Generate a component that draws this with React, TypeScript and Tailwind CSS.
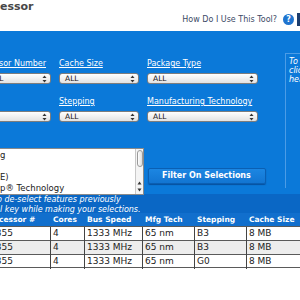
import type { ReactNode } from 'react';

const Arrows = () => (
    <svg width="5" height="8" viewBox="0 0 5 8" className="shrink-0">
        <path d="M2.5 0.5 L4.5 3 H0.5 Z" fill="#333" />
        <path d="M2.5 7.5 L4.5 5 H0.5 Z" fill="#333" />
    </svg>
);

const Select = ({ className = '' }: { className?: string }) => (
    <div
        className={`h-[11px] flex items-center justify-between rounded-[3px] border border-[#7d7d7d] bg-gradient-to-b from-white to-[#e2e2e2] pl-[5px] pr-[3px] text-[7.5px] leading-none text-[#111] ${className}`}
    >
        <span>ALL</span>
        <Arrows />
    </div>
);

const Label = ({ children, className = '' }: { children: ReactNode; className?: string }) => (
    <div className={`h-[10px] leading-[10px] text-[8px] text-white underline whitespace-nowrap ${className}`}>{children}</div>
);

const rows = [
    { id: '3355', step: 'B3', bg: 'bg-white' },
    { id: '3355', step: 'B3', bg: 'bg-[#ededed]' },
    { id: '3355', step: 'G0', bg: 'bg-white' },
];

const App = () => {
    return (
        <div className="w-[300px] h-[300px] overflow-hidden bg-white font-['DejaVu_Sans',Verdana,sans-serif]">
            {/* top strip */}
            <div className="h-[31px] flex justify-between items-start">
                <div className="mt-[1px] text-[11px] leading-[12px] font-bold text-[#474747] whitespace-nowrap">essor</div>
                <div className="mt-[13px] flex items-center">
                    <span className="text-[8px] text-[#3c4a66] whitespace-nowrap">How Do I Use This Tool?</span>
                    <span className="ml-[6px] w-[11px] h-[11px] rounded-full bg-[#1f74cf] text-white text-[8px] font-bold leading-none flex items-center justify-center">?</span>
                    <span className="ml-[3px] w-[3px] h-[13px] bg-[#1c3d6e]" />
                </div>
            </div>

            {/* search panel */}
            <div className="h-[163px] bg-[#0b79d9] flex">
                <div className="w-[285px] pt-[28px]">
                    <div className="grid grid-cols-[51px_80px_111px] gap-x-[8px] gap-y-[13px]">
                        <div className="flex flex-col gap-[4px]">
                            <Label className="-ml-[1px]">sor Number</Label>
                            <Select className="w-[67px] -ml-[16px]" />
                        </div>
                        <div className="flex flex-col gap-[4px]">
                            <Label>Cache Size</Label>
                            <Select />
                        </div>
                        <div className="flex flex-col gap-[4px]">
                            <Label>Package Type</Label>
                            <Select />
                        </div>
                        <div className="flex flex-col gap-[4px]">
                            <div className="h-[10px]" />
                            <Select className="w-[71px] -ml-[20px]" />
                        </div>
                        <div className="flex flex-col gap-[4px]">
                            <Label>Stepping</Label>
                            <Select />
                        </div>
                        <div className="flex flex-col gap-[4px]">
                            <Label>Manufacturing Technology</Label>
                            <Select />
                        </div>
                    </div>

                    <div className="mt-[26px] flex items-start">
                        <div className="w-[144px] h-[47px] bg-white border border-[#8a8a8a] border-l-0 flex">
                            <div className="flex-1 pt-[1px] text-[8.5px] leading-[11px] text-[#222] whitespace-nowrap overflow-hidden">
                                <div>g</div>
                                <div>&nbsp;</div>
                                <div>E)</div>
                                <div>p® Technology</div>
                            </div>
                            <div className="w-[8px] border-l border-[#c8c8c8] bg-[#f4f4f4] flex flex-col items-center">
                                <div className="mt-[1px] w-[6px] h-[17px] rounded-full border border-[#9a9a9a] bg-gradient-to-r from-white to-[#dcdcdc]" />
                                <div className="flex-1" />
                                <svg width="5" height="4" viewBox="0 0 5 4" className="mb-[3px]">
                                    <path d="M2.5 0.5 L4.5 3.5 H0.5 Z" fill="#333" />
                                </svg>
                                <svg width="5" height="4" viewBox="0 0 5 4" className="mb-[2px]">
                                    <path d="M2.5 3.5 L4.5 0.5 H0.5 Z" fill="#333" />
                                </svg>
                            </div>
                        </div>
                        <button className="ml-[4px] mt-[20px] w-[118px] h-[16px] rounded-[2px] border border-[#0a5fb3] bg-gradient-to-b from-[#1c86e2] to-[#1275d2] shadow-[0_1px_1px_rgba(0,40,100,0.5)] pl-[13px] text-left text-[8px] font-bold text-white whitespace-nowrap">
                            Filter On Selections
                        </button>
                    </div>
                </div>

                <div className="flex-1 mt-[22px] h-[135px] border-l border-t border-[#4c9ce6] pl-[3px] pt-[3px] text-[8px] leading-[9px] italic text-white whitespace-nowrap overflow-hidden">
                    <div>To</div>
                    <div>clic</div>
                    <div>hea</div>
                </div>
            </div>

            {/* instructions */}
            <div className="h-[19px] bg-[#0a67c5] pt-[1px] text-[8px] leading-[10px] italic text-white whitespace-nowrap">
                <div className="-ml-[3px]">o de-select features previously</div>
                <div>l key while making your selections.</div>
            </div>

            {/* results */}
            <div className="grid grid-cols-[51px_34px_58px_52px_52px_1fr] text-[7.5px] font-bold text-white bg-[#116fcd] h-[13px] items-center whitespace-nowrap">
                <div className="-ml-[1px]">cessor #</div>
                <div className="pl-[2px]">Cores</div>
                <div className="pl-[2px]">Bus Speed</div>
                <div className="pl-[2px]">Mfg Tech</div>
                <div className="pl-[2px]">Stepping</div>
                <div className="pl-[2px]">Cache Size</div>
            </div>
            {rows.map((r, i) => (
                <div
                    key={i}
                    className={`grid grid-cols-[51px_34px_58px_52px_52px_1fr] h-[14px] border-t border-[#5a5a5a] last:border-b text-[9px] text-[#222] whitespace-nowrap ${r.bg}`}
                >
                    <div className="border-r border-[#444] flex items-center overflow-hidden">
                        <span className="-ml-[10px]">{r.id}</span>
                    </div>
                    <div className="border-r border-[#444] flex items-center pl-[2px]">4</div>
                    <div className="border-r border-[#444] flex items-center pl-[2px]">1333 MHz</div>
                    <div className="border-r border-[#444] flex items-center pl-[2px]">65 nm</div>
                    <div className="border-r border-[#444] flex items-center pl-[2px]">{r.step}</div>
                    <div className="flex items-center pl-[2px]">8 MB</div>
                </div>
            ))}
        </div>
    );
};

export default App;
